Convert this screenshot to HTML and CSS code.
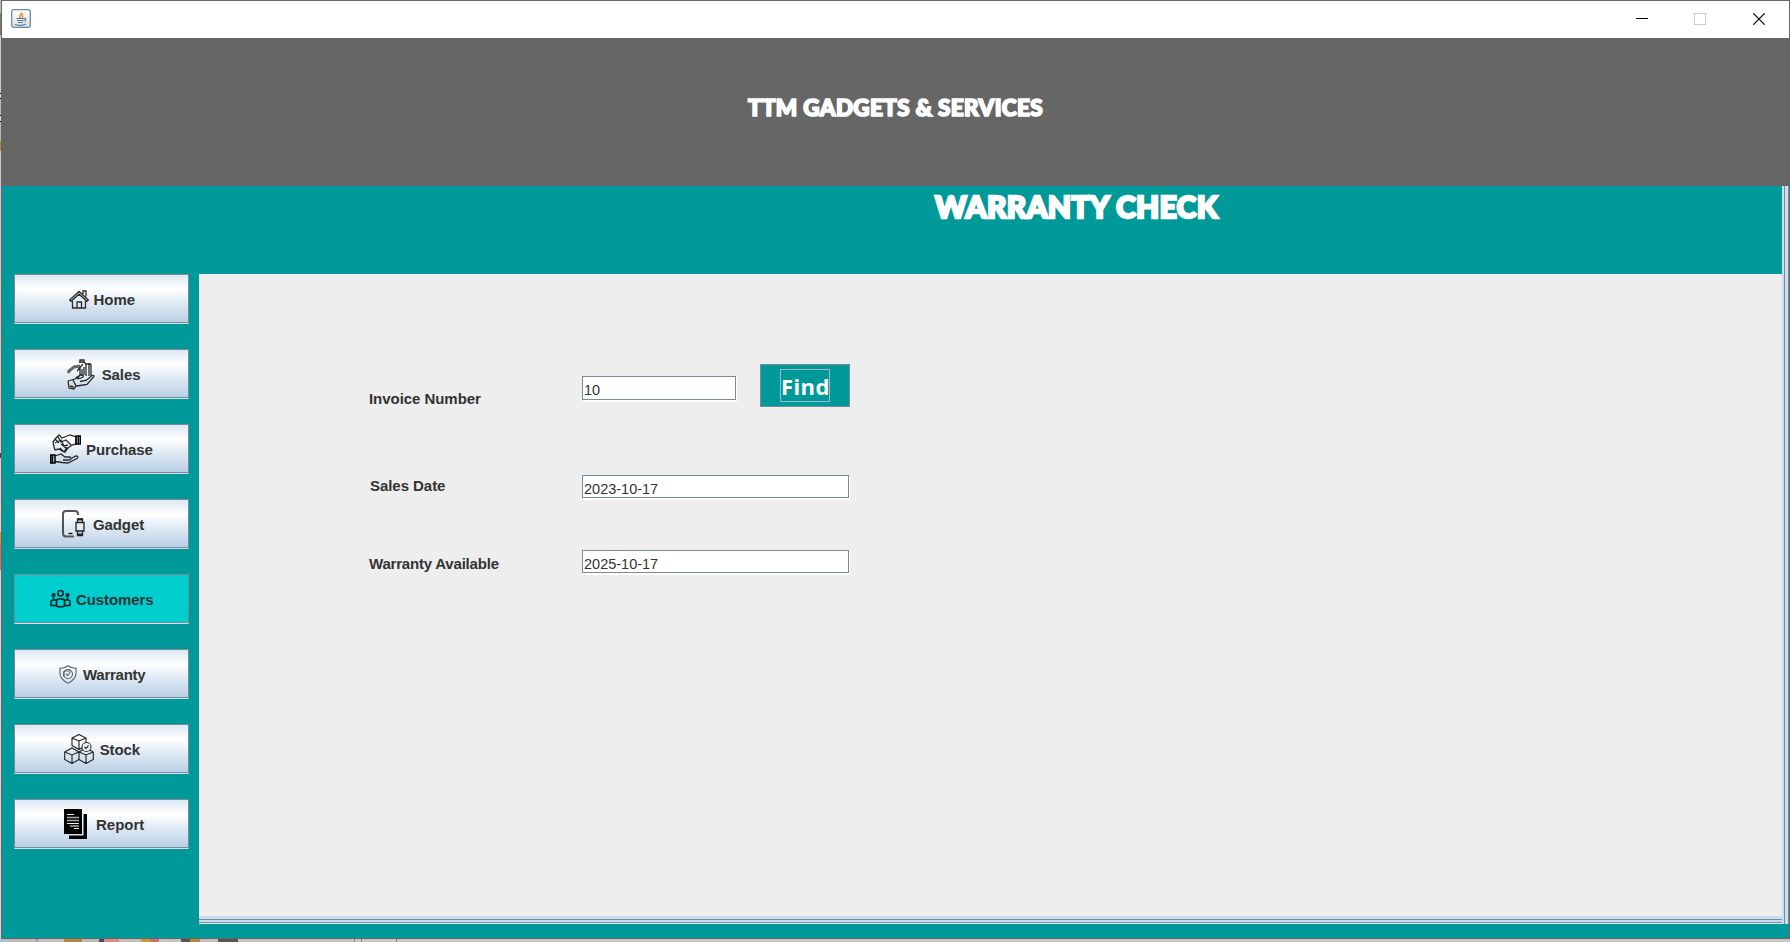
FILE: index.html
```html
<!DOCTYPE html>
<html lang="en">
<head>
<meta charset="utf-8">
<title>Warranty Check</title>
<link rel="stylesheet" href="styles.css">
</head>
<body>
<div class="desktop">
<div class="window">
  <div class="titlebar">
    <svg class="java" width="20" height="19" viewBox="0 0 20 19"><defs><linearGradient id="jg" x2="0" y2="1"><stop offset="0" stop-color="#fff"/><stop offset="1" stop-color="#dde0e4"/></linearGradient></defs><rect x=".7" y=".7" width="18.6" height="17.6" rx="2" fill="url(#jg)" stroke="#6d8ba0" stroke-width="1.3"/><path d="M10 9C6.500 7 11.500 5.500 10.500 3.500M11 9c2-2-1-2 1-4" fill="none" stroke="#ee8a3c" stroke-width="1.500"/><path d="M5.500 9.500h8M6 11.500h7M7 13.500h5M13 9.500c3-.5 2 2.500 0 2.500M4 15.500c3 1 8 1 11-.5" fill="none" stroke="#527b9d" stroke-width="1.200"/></svg>
    <div class="controls">
      <svg width="12" height="12" shape-rendering="crispEdges"><path d="M0 5.500h12" stroke="#000"/></svg>
      <svg width="12" height="12"><rect x=".5" y=".5" width="11" height="11" fill="none" stroke="#ccc"/></svg>
      <svg width="12" height="12"><path d="M.3.3l11.400 11.400M11.700.3L.3 11.700" stroke="#000" stroke-width="1.200"/></svg>
    </div>
  </div>
  <header class="banner"><h1 class="brand">TTM GADGETS &amp; SERVICES</h1></header>
  <div class="body">
    <div class="heading"><h2 class="page-title">WARRANTY CHECK</h2></div>
    <nav class="nav">
      <button class="nav-btn home"><svg width="20" height="19" viewBox="0 0 20 19"><path d="M.7 10L10 1.500l9.300 8.500-1.300 1.300L10 4.200l-8 7.100zM3.500 11v7h13v-7M8 18v-6h4.500v6M14 4V1h3v5.500M3 18h14"/></svg><span>Home</span></button>
      <button class="nav-btn sales"><svg width="28" height="31" viewBox="0 0 28 31"><path d="M1 14l1-2 5-4 6-1" stroke="#666" stroke-width="3"/><path d="M10 12l6-7M12 3h5l2 2M13 3V1h4v3M13 8v8l-3 4M15 10v6M17 8v8M19 5v12M22 4v13M24 5v12M19 5h5M1 22l7-2 2-2 4-2c3 0 3 2 0 3l-3 1M9 27l4-.5 7-1 7-8c0-2-2-1-3 0l-5 4-6 1M1 22l1 7 5 1 2-3-3-6M3 27l4 1"/></svg><span>Sales</span></button>
      <button class="nav-btn purchase"><svg width="31" height="31" viewBox="0 0 31 31"><path d="M3 8l3-4 3-3 3 3 5-2 3-1 6 2v7l-4 1-4 3-3 4-3-1-3-2-4 1-1-3zM8 3l3 5 5-2 5 5M5 9l6-3 3 6 4-1M10 14l4 4 3-5M11 10l6 5M5 5l4 4M5 22l6-2 4 3 5 0c2 1 1 3-1 3h-6M20 25l6-3c3 0 2 2 0 3l-8 4-6-.5-7-1"/><path d="M26 2h4.300v8H26zM.700 21H5v8H.700zM28.300 2v8M2.500 21v8" stroke="#000" stroke-width="1.500"/></svg><span>Purchase</span></button>
      <button class="nav-btn gadget"><svg width="23" height="28" viewBox="0 0 23 28"><path d="M1 3v20" stroke="#000" stroke-width="1.300"/><path d="M1 4q0-3 3-3h9q3 0 3 3v1M1 23q0 3.500 3 3.500h8" stroke="#555" stroke-width="2"/><path d="M6.500 23.500h4" stroke="#000"/><path d="M14 12.500h8v8.500h-8zM15.500 12V9h5v3M15.500 21v4.500h5V21" stroke="#222" stroke-width="1.300"/><path d="M16 9.500h5M16 24.500h5" stroke="#222" stroke-width="2"/></svg><span>Gadget</span></button>
      <button class="nav-btn customers active"><svg width="21" height="18" viewBox="0 0 21 18"><g stroke="#001c1c" stroke-width="1.500"><circle cx="10.500" cy="3.300" r="2.700"/><circle cx="3.500" cy="5" r="1.300"/><circle cx="17.500" cy="5" r="1.300"/><path d="M6.500 16v-5q0-2 2-2h4q2 0 2 2v5q-4 2-8 0zM6 10H3q-2 0-2 2v3.500h5M15 10h3q2 0 2 2v3.500h-5M3.500 6.500V10M17.500 6.500V10"/></g></svg><span>Customers</span></button>
      <button class="nav-btn warranty"><svg width="18" height="19" viewBox="0 0 18 19"><g stroke="#5c6064" stroke-width="1.100"><path d="M9 .7q4 3 8 2.500v5c0 5-4 8-8 10-4-2-8-5-8-10v-5Q5 3.700 9 .7z"/><circle cx="9" cy="9" r="4.500"/><path d="M7 9l1.500 1.500L11.500 7M5 6h7M5 6v6"/></g></svg><span>Warranty</span></button>
      <button class="nav-btn stock"><svg width="30" height="30" viewBox="0 0 30 30"><path d="M8 4l7-3.500L22 4v7.500l-7 4-7-4zM8 4l7 3 7-3M15 7v8.500M.700 18L8 14l7 4v7.500l-7 4-7.300-4zM.7 18L8 21l7-3M8 21v8.500M15 18l7-4 7.300 4v7.500l-7.300 4-7-4M15 18l7 3 7.300-3M22 21v8.500" stroke="#222" stroke-width="1.100"/><circle cx="22.500" cy="13" r="4.500" fill="#eef3f8" stroke="#333" stroke-width="1.100"/><path d="M20.500 13l1.500 1.500L24.500 11.500" stroke="#333" stroke-width="1.200"/></svg><span>Stock</span></button>
      <button class="nav-btn report"><svg width="23" height="30" viewBox="0 0 23 30"><path d="M0 0h18v25H0z" fill="#000" stroke="none"/><path d="M19.500 5H23v25H5v-3.500h14.500z" fill="#000" stroke="none"/><path d="M3 5.500h7M3 14.500h12M10 19.500h5" stroke="#eee" stroke-width="1"/><path d="M3 8.500h12M3 11.500h12M6 17h9" stroke="#aaa" stroke-width="1.500"/></svg><span>Report</span></button>
    </nav>
    <main class="panel">
      <div class="form">
        <div class="row row-invoice"><label class="label">Invoice Number</label><div class="field short">10</div><button class="find"><span class="focus">Find</span></button></div>
        <div class="row row-sales"><label class="label">Sales Date</label><div class="field">2023-10-17</div></div>
        <div class="row row-warranty"><label class="label">Warranty Available</label><div class="field">2025-10-17</div></div>
      </div>
    </main>
    <div class="frame-right"></div>
    <div class="frame-bottom"></div>
  </div>
</div>
</div>
</body>
</html>
```

FILE: styles.css
```css
* { box-sizing: border-box; }
body { margin: 0; overflow: hidden; font-family: "Liberation Sans", Arial, sans-serif; font-size: 15px; color: #333; }
button { font: inherit; color: inherit; padding: 0; }
h1, h2 { margin: 0; }
svg { display: block; flex: none; }

/* Slivers of the desktop behind the window */
.desktop {
  width: 1790px; height: 942px; padding: 0 0 3px 1px;
  background:
    linear-gradient(90deg, #9cc4e0 0 6px, #bbb 6px 36px, #7aa6c4 36px 38px, #c0c0c0 38px 64px, #b08a45 64px 82px, #bbb 82px 99px, #37507a 99px 104px, #d98c8c 104px 119px, #c0c0c0 119px 141px, #c89a3c 141px 150px, #c96f73 150px 159px, #c4c4c4 159px 181px, #555 181px 190px, #b08a45 190px 200px, #c0c0c0 200px 218px, #555 218px 238px, #c4c4c4 238px 354px, #888 354px 355px, #c8c8c8 355px 361px, #888 361px 362px, #c8c8c8 362px 396px, #888 396px 397px, #c8c8c8 397px) 0 100% / 100% 3px no-repeat,
    linear-gradient(#bbb 0 13px, #38a838 13px 18px, #857263 18px 35px, #ccc 35px 93px, #000 93px 94px, #ddd 94px 98px, #000 98px 99px, #bbb 99px 115px, #000 115px 116px, #ddd 116px 121px, #000 121px 122px, #bbb 122px 141px, #b08a30 141px 151px, #ccc 151px 453px, #345 453px 458px, #d4d4d4 458px 532px, #c49545 532px 545px, #c2756c 545px 570px, #d4d4d4 570px) 0 0 / 1px 100% no-repeat,
    #ccc;
}
.window { height: 939px; display: flex; flex-direction: column; border: 1px solid #666; }
.titlebar { height: 37px; flex: none; background: #fff; display: flex; justify-content: space-between; align-items: flex-start; padding: 8px 24px 0 9px; }
.controls { display: flex; gap: 46px; padding-top: 4px; }
.controls svg:last-child { margin-left: 1px; }
.banner { height: 148px; flex: none; background: #666; display: flex; justify-content: center; padding-top: 56px; }
.brand, .page-title { font-family: Lato, sans-serif; font-weight: 900; color: #fff; white-space: nowrap; }
.brand { font-size: 22.5px; line-height: 28px; letter-spacing: .35px; -webkit-text-stroke: 1.7px #fff; }
.page-title { font-size: 30px; line-height: 34px; letter-spacing: .3px; -webkit-text-stroke: 2.4px #fff; }

.body { flex: 1; background: #099; display: grid; grid-template-columns: 197px 1583px 7px; grid-template-rows: 88px 642px 8px 14px; }
.heading { grid-column: 1 / 3; padding: 3px 0 0 933px; }
.nav { grid-column: 1; grid-row: 2 / 5; display: flex; flex-direction: column; gap: 25px; padding-left: 12px; }
.nav-btn {
  width: 175px; height: 50px; display: flex; align-items: center;
  border: 1px solid #7a8a99; box-shadow: inset 0 -1px #7a8a99; border-bottom-color: #d5e0ea;
  background: linear-gradient(#dde8f3 0, #fff 30%, #dde8f3 60%, #b8cfe5 100%); font-weight: bold; letter-spacing: -.1px;
}
.nav-btn.active { background: #00cdcd; }
.nav-btn svg { fill: none; stroke: #2a2a2a; stroke-width: 1.3; }
.home { padding-left: 54px; gap: 4.6px; }
.sales { padding-left: 52px; gap: 6.7px; }
.purchase { padding-left: 35px; gap: 5px; }
.gadget { padding-left: 47px; gap: 8px; }
.customers { padding-left: 35px; gap: 5px; }
.warranty { padding-left: 44px; gap: 6px; letter-spacing: -.25px; }
.stock { padding-left: 49px; gap: 5.7px; }
.report { padding-left: 49px; gap: 9px; letter-spacing: 0; }

.panel { grid-column: 2; grid-row: 2; background: #eee; }
.form { padding: 90px 0 0 170px; }
.row { display: flex; align-items: flex-start; height: 24px; }
.row-invoice { height: 111px; }
.row-sales { height: 75px; }
.label { width: 213px; font-weight: bold; line-height: 18px; white-space: nowrap; letter-spacing: -.05px; }
.row-invoice .label { padding-top: 26px; }
.row-sales .label { padding: 2px 0 0 1px; }
.row-warranty .label { padding-top: 5px; letter-spacing: -.2px; }
.field { width: 267px; height: 23px; background: #fff; border: 1px solid #7a8a99; box-shadow: 1px 1px #fff, 1px 2px #fff; padding: 4px 0 0 1px; font-size: 14.5px; line-height: 18px; }
.field.short { width: 154px; height: 24px; margin-top: 12px; }
.find { width: 90px; height: 43px; margin-left: 24px; background: #099; border: 1px solid #7a8a99; display: flex; align-items: flex-start; justify-content: center; padding-top: 4px; }
.focus { width: 50px; height: 33px; border: 1px solid #a3b8cc; color: #fff; font: bold 22px/32px "Open Sans", sans-serif; letter-spacing: .4px; text-align: center; }

.frame-right { grid-column: 3; grid-row: 1 / 4; background: linear-gradient(90deg, #c8ddf2 0 2px, #7a8a99 2px 3px, #c8ddf2 3px 6px, #7a8a99 6px 7px); }
.frame-bottom { grid-column: 2; grid-row: 3; background: linear-gradient(#c8ddf2 0 3px, #7a8a99 3px 4px, #c8ddf2 4px 6px, #7a8a99 6px 7px, #e4edf6 7px 8px); }
```
